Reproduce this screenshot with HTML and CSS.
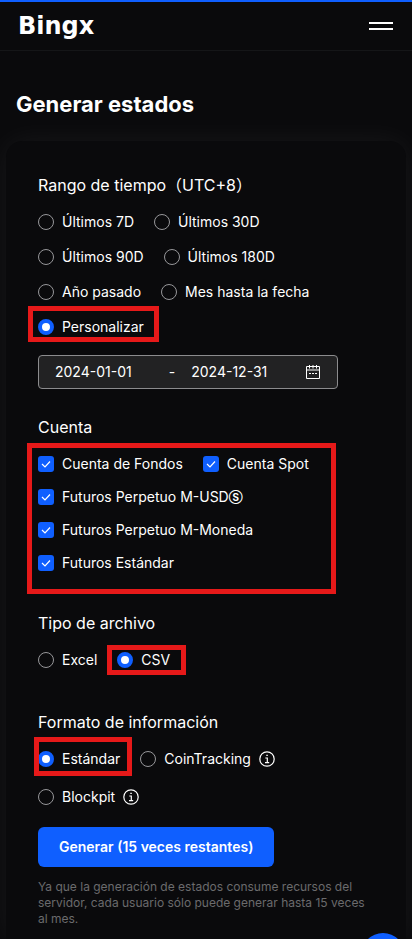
FILE: index.html
```html
<!DOCTYPE html>
<html lang="es">
<head>
  <meta charset="UTF-8" />
  <meta name="viewport" content="width=device-width, initial-scale=1.0" />
  <title>Generar estados</title>
  <link rel="stylesheet" href="styles.css">
</head>
<body>
  <div class="page">
    <header class="header">
      <a class="logo" href="#">Bingx</a>
      <button class="menu" type="button" aria-label="Menú"><span></span><span></span></button>
    </header>

    <h1>Generar estados</h1>

    <form class="card">
      <fieldset class="section">
        <legend>Rango de tiempo（UTC+8）</legend>
        <div class="options range">
          <label class="option"><input type="radio" name="range"> Últimos 7D</label>
          <label class="option"><input type="radio" name="range"> Últimos 30D</label>
          <label class="option"><input type="radio" name="range"> Últimos 90D</label>
          <label class="option"><input type="radio" name="range"> Últimos 180D</label>
          <label class="option"><input type="radio" name="range"> Año pasado</label>
          <label class="option"><input type="radio" name="range"> Mes hasta la fecha</label>
          <label class="option mark mark-range"><input type="radio" name="range" checked> Personalizar</label>
        </div>
        <div class="dates">
          <input type="text" value="2024-01-01" aria-label="Desde">
          <span class="dash">-</span>
          <input type="text" value="2024-12-31" aria-label="Hasta">
          <button class="calendar" type="button" aria-label="Calendario">
            <svg width="16" height="16" viewBox="0 0 16 16" fill="none" stroke="#fff">
              <path d="M1.5 2.5h13v12h-13zM1 6h14M4.5 1v3.5M8 1v3.5M11.500 1v3.5" />
              <path d="M4 9.500h2M7 9.500h2M10 9.500h2" />
            </svg>
          </button>
        </div>
      </fieldset>

      <fieldset class="section">
        <legend>Cuenta</legend>
        <div class="options accounts mark mark-accounts">
          <label class="option"><input type="checkbox" checked> Cuenta de Fondos</label>
          <label class="option"><input type="checkbox" checked> Cuenta Spot</label>
          <label class="option"><input type="checkbox" checked> <span>Futuros Perpetuo M-USD<span class="coin">Ⓢ</span></span></label>
          <label class="option"><input type="checkbox" checked> Futuros Perpetuo M-Moneda</label>
          <label class="option"><input type="checkbox" checked> Futuros Estándar</label>
        </div>
      </fieldset>

      <fieldset class="section file">
        <legend>Tipo de archivo</legend>
        <div class="options">
          <label class="option"><input type="radio" name="file"> Excel</label>
          <label class="option mark mark-file"><input type="radio" name="file" checked> CSV</label>
        </div>
      </fieldset>

      <fieldset class="section">
        <legend>Formato de información</legend>
        <div class="options format">
          <label class="option mark mark-format"><input type="radio" name="format" checked> Estándar</label>
          <label class="option"><input type="radio" name="format"> CoinTracking
            <svg width="16" height="16" viewBox="0 0 16 16" fill="none" stroke="#fff" stroke-width="1.200">
              <circle cx="8" cy="8" r="7.200" />
              <path d="M6.300 7h2v4.500M6 11.600h4.200M7.300 4.400h1.500" />
            </svg>
          </label>
          <label class="option"><input type="radio" name="format"> Blockpit
            <svg width="16" height="16" viewBox="0 0 16 16" fill="none" stroke="#fff" stroke-width="1.200">
              <circle cx="8" cy="8" r="7.200" />
              <path d="M6.300 7h2v4.500M6 11.600h4.200M7.300 4.400h1.500" />
            </svg>
          </label>
        </div>
      </fieldset>

      <button class="submit" type="button">Generar (15 veces restantes)</button>
      <p class="note">Ya que la generación de estados consume recursos del servidor, cada usuario sólo puede generar hasta 15 veces al mes.</p>
    </form>
  </div>

  <button class="chat" type="button" aria-label="Chat"></button>
</body>
</html>
```

FILE: styles.css
```css
* {
  box-sizing: border-box;
}

body {
  margin: 0;
  background: #0a0a0c;
  color: #fff;
  font-family: Inter, "Noto Sans CJK SC", sans-serif;
  font-size: 14px;
  line-height: 20px;
}

button,
input {
  margin: 0;
  padding: 0;
  border: 0;
  background: none;
  color: inherit;
  font: inherit;
}

.page {
  display: flex;
  flex-direction: column;
  min-height: 100vh;
  overflow: hidden;
}

.header {
  display: flex;
  align-items: center;
  justify-content: space-between;
  height: 51px;
  padding: 0 19px 0 18px;
  border-top: 2px solid #0f5fff;
  border-bottom: 1px solid #151618;
}

.logo {
  color: #fff;
  font-family: "DejaVu Sans", sans-serif;
  font-size: 24px;
  font-weight: bold;
  line-height: 28px;
  text-decoration: none;
}

.menu {
  display: flex;
  flex-direction: column;
  gap: 4px;
  width: 24px;
}

.menu span {
  height: 2px;
  background: #fff;
}

h1 {
  margin: 38px 16px 21px;
  font-size: 22px;
  font-weight: 700;
  line-height: 31px;
}

.card {
  flex: 1;
  margin: 0 6px;
  padding: 32px 32px 12px;
  border-radius: 16px 16px 0 0;
  background: #0a0a0c;
  box-shadow: 0 0 30px rgba(255, 255, 255, 0.06);
}

.section {
  min-width: 0;
  margin: 0 0 38px;
  padding: 0;
  border: 0;
}

.section.file {
  margin-bottom: 40px;
}

legend {
  margin-bottom: 15px;
  padding: 0;
  font-size: 16px;
  line-height: 24px;
}

.options {
  display: flex;
  flex-wrap: wrap;
  gap: 13px 20px;
}

.range {
  row-gap: 15px;
}

.format {
  row-gap: 18px;
}

.option {
  display: flex;
  align-items: center;
  gap: 8px;
}

.option input {
  flex: none;
  appearance: none;
  width: 16px;
  height: 16px;
}

.option input[type="radio"] {
  border: 1px solid #97979a;
  border-radius: 50%;
}

.option input[type="radio"]:checked {
  border: 4px solid #0f5fff;
  background: #fff;
}

.option input[type="checkbox"] {
  border-radius: 3px;
  background: #0f5fff url("data:image/svg+xml,%3Csvg xmlns='http://www.w3.org/2000/svg' viewBox='0 0 16 16'%3E%3Cpath d='M4 8l3 3 5-5.500' fill='none' stroke='white' stroke-width='1.200'/%3E%3C/svg%3E");
}

.coin {
  font-size: 10px;
  font-weight: 700;
  line-height: 1;
  vertical-align: 1px;
}

/* red frames around the choices to pick */
.mark {
  position: relative;
}

.mark::after {
  content: "";
  position: absolute;
  border: 5px solid #e61919;
  pointer-events: none;
}

.mark-range::after {
  inset: -11px -15px -5px -10px;
}

.mark-accounts::after {
  inset: -11px 38px -21px -11px;
}

.mark-file::after {
  inset: -5px -16px -5px -10px;
}

.mark-format::after {
  inset: -12px -12px -7px -4px;
}

.dates {
  display: flex;
  align-items: center;
  max-width: 300px;
  height: 34px;
  margin: 18px 0 -12px;
  padding: 0 16px;
  border: 1px solid #8c8c8e;
  border-radius: 4px;
  background: #222223;
}

.dates input {
  flex: 1;
  min-width: 0;
}

.dash {
  margin-right: 16px;
}

.calendar {
  display: flex;
}

.submit {
  display: block;
  height: 40px;
  margin-top: -18px;
  padding: 0 21px;
  border-radius: 6px;
  background: #0f5fff;
  font-weight: 600;
}

.note {
  margin: 12px 0 0;
  color: #6b6b6d;
  font-size: 12px;
  line-height: 16px;
}

.chat {
  position: fixed;
  right: 7px;
  bottom: -38px;
  width: 44px;
  height: 44px;
  border-radius: 50%;
  background: #0f5fff;
}
```
